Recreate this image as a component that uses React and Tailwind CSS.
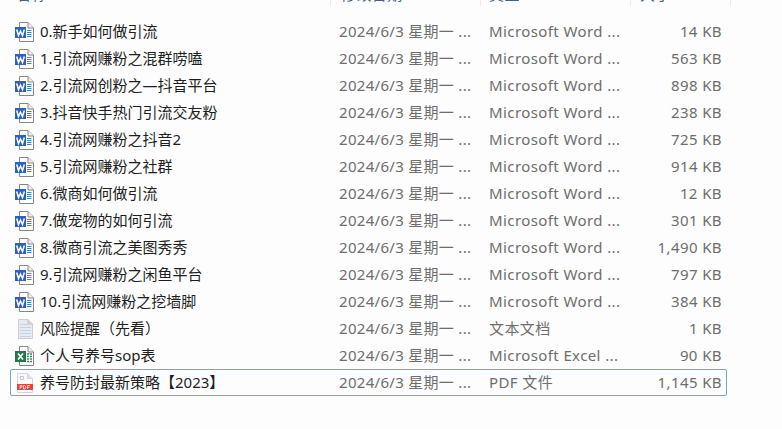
function WordIcon() {
  return (
    <svg width="20" height="20" viewBox="0 0 20 20" className="shrink-0">
      <path d="M4.5 0.5H13L18.5 6V19.5H4.5Z" fill="#fff" stroke="#858585" />
      <path d="M13 0.5V6H18.5" fill="#f0f0f0" stroke="#858585" />
      <path d="M12 8.5H16.5M12 10.5H16.5M12 12.5H16.5M12 14.5H16.5" stroke="#3f7fd0" />
      <rect x="0" y="5" width="11" height="11" fill="#2b62bd" />
      <path d="M1.7 7.5L3.5 13.5L5.5 9L7.5 13.5L9.3 7.5" fill="none" stroke="#fff" strokeWidth="1.5" />
    </svg>
  );
}

function TextIcon() {
  return (
    <svg width="20" height="20" viewBox="0 0 20 20" className="shrink-0">
      <path d="M3.5 0.5H13L17.5 5V19.5H3.5Z" fill="#e4ebf2" stroke="#cfcfcf" />
      <path d="M13 0.5V5H17.5" fill="#d8d8d8" stroke="#c4c4c4" />
      <path d="M5 5.5H13M5 8.5H16M5 11.5H16M5 14.5H16M5 17.5H16" stroke="#c6d2de" strokeWidth="1.2" />
    </svg>
  );
}

function ExcelIcon() {
  return (
    <svg width="20" height="20" viewBox="0 0 20 20" className="shrink-0">
      <path d="M4.5 0.5H13L18.5 6V19.5H4.5Z" fill="#fff" stroke="#858585" />
      <path d="M13 0.5V6H18.5" fill="#f0f0f0" stroke="#858585" />
      <path d="M12 8H17M12 10.5H17M12 13H17M12 15.5H17" stroke="#2f8f5b" strokeWidth="1.3" />
      <path d="M14.5 7.5V16" stroke="#fff" />
      <rect x="0" y="5" width="11" height="11" fill="#1f7a45" />
      <path d="M3 7.5L8 13.5M8 7.5L3 13.5" stroke="#fff" strokeWidth="1.7" />
    </svg>
  );
}

function PdfIcon() {
  return (
    <svg width="20" height="20" viewBox="0 0 20 20" className="shrink-0">
      <path d="M2.5 0.5H12.5L17.5 5.5V19.5H2.5Z" fill="#fbfbfb" stroke="#d4d4d4" />
      <path d="M12.5 0.5V5.5H17.5" fill="#e6e6e6" stroke="#d4d4d4" />
      <path d="M5.5 3.5H8.5V6.5H5.5Z" fill="none" stroke="#c8c8c8" />
      <rect x="2" y="11" width="16" height="6" fill="#e8423f" />
      <path d="M5 16V12.5H7V14.2H5M8.5 16V12.5H10L10.8 14.2L10 16H8.5ZM12.5 16V12.5H15M12.5 14.2H14.5" fill="none" stroke="#fff" strokeWidth="0.7" />
    </svg>
  );
}

const icons = { word: WordIcon, text: TextIcon, excel: ExcelIcon, pdf: PdfIcon };

const files = [
  { name: "0.新手如何做引流", type: "Microsoft Word ...", size: "14 KB", icon: "word" },
  { name: "1.引流网赚粉之混群唠嗑", type: "Microsoft Word ...", size: "563 KB", icon: "word" },
  { name: "2.引流网创粉之—抖音平台", type: "Microsoft Word ...", size: "898 KB", icon: "word" },
  { name: "3.抖音快手热门引流交友粉", type: "Microsoft Word ...", size: "238 KB", icon: "word" },
  { name: "4.引流网赚粉之抖音2", type: "Microsoft Word ...", size: "725 KB", icon: "word" },
  { name: "5.引流网赚粉之社群", type: "Microsoft Word ...", size: "914 KB", icon: "word" },
  { name: "6.微商如何做引流", type: "Microsoft Word ...", size: "12 KB", icon: "word" },
  { name: "7.做宠物的如何引流", type: "Microsoft Word ...", size: "301 KB", icon: "word" },
  { name: "8.微商引流之美图秀秀", type: "Microsoft Word ...", size: "1,490 KB", icon: "word" },
  { name: "9.引流网赚粉之闲鱼平台", type: "Microsoft Word ...", size: "797 KB", icon: "word" },
  { name: "10.引流网赚粉之挖墙脚", type: "Microsoft Word ...", size: "384 KB", icon: "word" },
  { name: "风险提醒（先看）", type: "文本文档", size: "1 KB", icon: "text" },
  { name: "个人号养号sop表", type: "Microsoft Excel ...", size: "90 KB", icon: "excel" },
  { name: "养号防封最新策略【2023】", type: "PDF 文件", size: "1,145 KB", icon: "pdf", selected: true },
];

function Row({ file }) {
  const Icon = icons[file.icon];
  return (
    <div
      className={
        "flex h-[27px] w-[717px] items-center rounded-[2px] border " +
        (file.selected ? "border-[#7da2ce]" : "border-transparent")
      }
    >
      <div className="flex w-[328px] items-center gap-[5px] pl-[4px]">
        <Icon />
        <span className="truncate text-[15px] tracking-normal text-[#1e1e1e]">{file.name}</span>
      </div>
      <div className="w-[150px] whitespace-nowrap tracking-[0.3px] text-[#6d6d6d]">2024/6/3 星期一 ...</div>
      <div className="w-[150px] whitespace-nowrap text-[#6d6d6d]">{file.type}</div>
      <div className="w-[83px] text-right text-[#6d6d6d]">{file.size}</div>
    </div>
  );
}

function HeaderCell({ label, className }) {
  return (
    <div className={"h-[6px] border-r border-[#ececec] " + className}>
      <div className="flex h-[2px] items-end overflow-hidden leading-none">{label}</div>
    </div>
  );
}

export default function App() {
  return (
    <div
      className="h-[429px] w-[782px] overflow-hidden bg-[#fdfdfd] text-[15px] tracking-[0.4px]"
      style={{ fontFamily: '"Noto Sans", "Noto Sans CJK SC", sans-serif' }}
    >
      <div className="flex text-[#4c607a]">
        <HeaderCell label="名称" className="w-[331px] pl-[16px]" />
        <HeaderCell label="修改日期" className="w-[150px] pl-[10px]" />
        <HeaderCell label="类型" className="w-[150px] pl-[8px]" />
        <HeaderCell label="大小" className="w-[100px] pl-[9px]" />
      </div>
      <div className="flex flex-col pl-[10px] pt-[12px]">
        {files.map((file) => (
          <Row key={file.name} file={file} />
        ))}
      </div>
    </div>
  );
}
